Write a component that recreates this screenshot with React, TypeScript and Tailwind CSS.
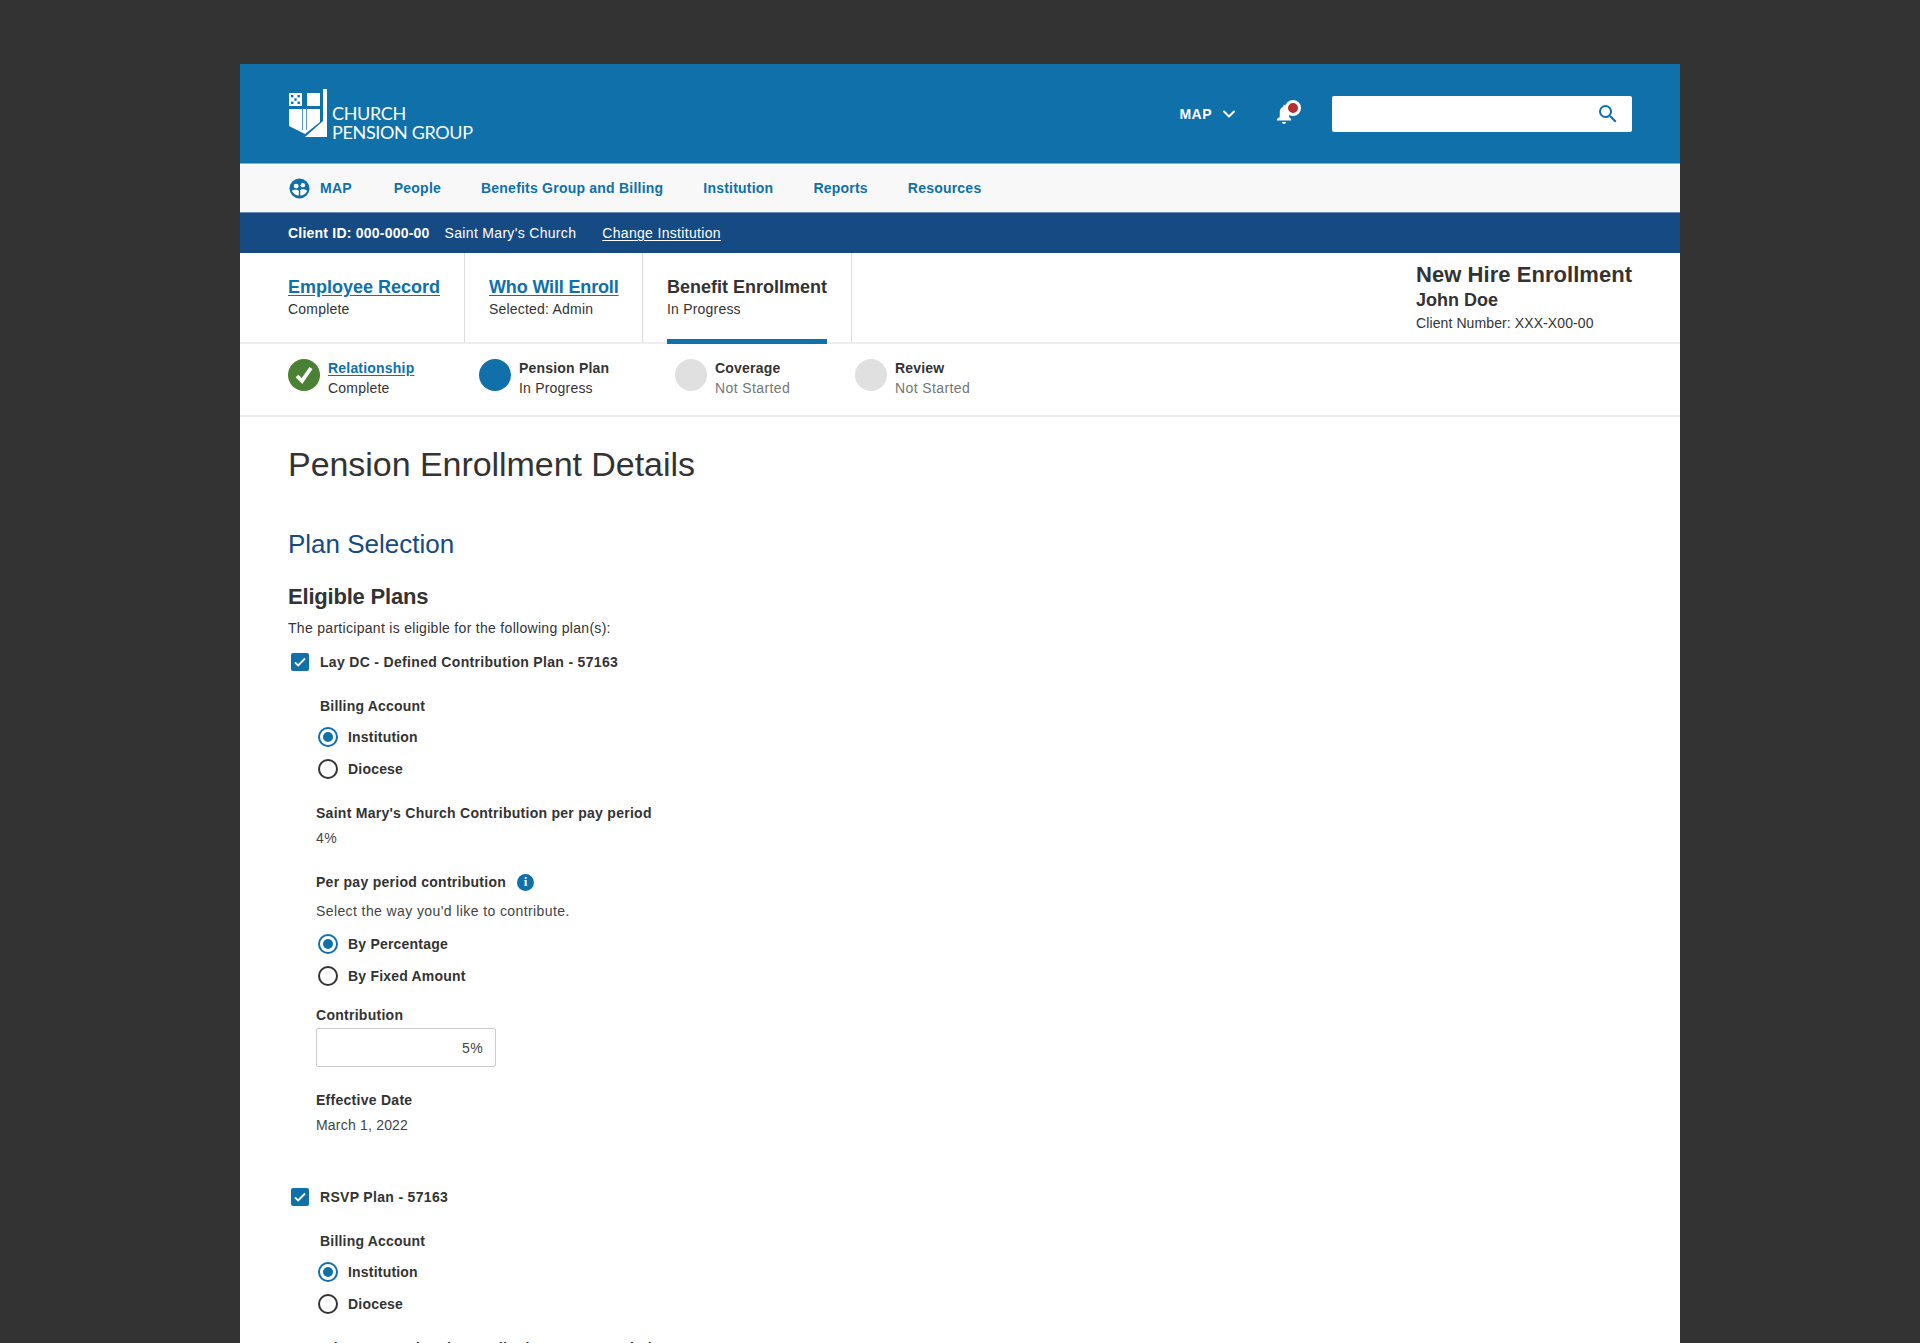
import React from "react";
import { ChevronDown } from "lucide-react";
import { MdSearch } from "react-icons/md";

const navItems = ["People", "Benefits Group and Billing", "Institution", "Reports", "Resources"];

function Logo() {
  return (
    <div className="flex items-start">
      <svg width="40" height="52" viewBox="0 0 40 52" className="mt-[24px] shrink-0">
        <rect x="1" y="5" width="13" height="13" fill="#fff" />
        <g fill="#0f70aa">
          <rect x="3" y="7" width="2.4" height="2.4" />
          <rect x="9.5" y="7" width="2.4" height="2.4" />
          <rect x="6.3" y="10.3" width="2.4" height="2.4" />
          <rect x="3" y="13.600" width="2.4" height="2.4" />
          <rect x="9.5" y="13.600" width="2.4" height="2.4" />
        </g>
        <rect x="19" y="5" width="13" height="13" fill="#fff" />
        <path d="M1 21H32V34L17 46L1 38Z" fill="#fff" />
        <path d="M14.500 21V42M18.500 21V42" stroke="#0f70aa" strokeOpacity="0.7" strokeWidth="1" fill="none" />
        <path d="M35 1H39V49H17L35 33Z" fill="#fff" />
      </svg>
      <div className="mt-[40px] ml-[4px] font-['Lato',sans-serif] text-[18px] leading-[19px] tracking-[-0.35px] text-white">
        <div>CHURCH</div>
        <div>PENSION GROUP</div>
      </div>
    </div>
  );
}

function Header() {
  return (
    <header className="flex h-[99px] items-start justify-between bg-[#0f70aa] pl-12 pr-12">
      <Logo />
      <div className="mt-8 flex items-center">
        <span className="text-sm font-bold tracking-[0.5px] text-white">MAP</span>
        <ChevronDown className="ml-[7px] h-5 w-5 text-white" strokeWidth={2.4} />
        <div className="relative ml-[35px] mr-[38px] h-[22px] w-[20px]">
          <svg viewBox="0 0 24 24" className="h-[22px] w-[20px] fill-white" preserveAspectRatio="none">
            <path d="M12 23a2.400 2.400 0 0 0 2.400-2.200H9.600A2.400 2.400 0 0 0 12 23Zm8.500-5.600-2.400-2V10c0-3-1.600-5.200-4.300-5.900V3.300a1.300 1.300 0 0 0-2.600 0v.8C8.500 4.800 6.900 7 6.900 10v5.400l-3.400 2v1.800h17Z" />
          </svg>
          <span className="absolute right-[-7px] top-[-3px] h-4 w-4 rounded-full border-[3px] border-white bg-[#b5302d]" />
        </div>
        <div className="flex h-9 w-[300px] items-center justify-end rounded-[2px] bg-white pr-[12px]">
          <MdSearch className="h-6 w-6 text-[#0f70aa]" />
        </div>
      </div>
    </header>
  );
}

function MainNav() {
  return (
    <nav className="flex h-[49px] items-center border-t border-[#7fb0cf] bg-[#f8f8f8] pl-12 text-sm font-bold tracking-[0.22px] text-[#0f70aa]">
      <svg viewBox="0 0 22 22" className="ml-[1px] h-[21px] w-[21px]">
        <circle cx="11" cy="11" r="10.500" fill="#0f70aa" />
        <circle cx="7.500" cy="8.500" r="2.600" fill="#fff" />
        <circle cx="14.500" cy="7.500" r="2.300" fill="#fff" />
        <path d="M3 13.500c1-1.500 6.500-1.500 7.300 0v4.800c-3-.2-5.800-2-7.300-4.800ZM11.800 12.500c1-1.200 5.700-1.200 7.200 1-1.200 2.700-4 4.600-7.200 4.800Z" fill="#fff" />
      </svg>
      <span className="ml-[10px]">MAP</span>
      <div className="ml-[42px] flex gap-10">
        {navItems.map((item) => (
          <span key={item}>{item}</span>
        ))}
      </div>
    </nav>
  );
}

function ClientBar() {
  return (
    <div className="flex h-[41px] items-center border-t border-[#6f8fb3] bg-[#164a82] pl-12 text-sm text-white">
      <span className="font-bold tracking-[0.22px]">Client ID: 000-000-00</span>
      <span className="ml-[15px] tracking-[0.32px]">Saint Mary's Church</span>
      <span className="ml-[26px] tracking-[0.32px] underline underline-offset-2">Change Institution</span>
    </div>
  );
}

function TabBar() {
  return (
    <div className="flex h-[91px] border-b-2 border-[#eeeeee] text-[#333]">
      <div className="w-[225px] border-r border-[#dddddd] pl-12 pt-[22px]">
        <div className="text-lg font-bold leading-6 text-[#0f70aa] underline underline-offset-2">Employee Record</div>
        <div className="text-sm leading-5 tracking-[0.2px]">Complete</div>
      </div>
      <div className="w-[178px] border-r border-[#dddddd] pl-6 pt-[22px]">
        <div className="text-lg font-bold leading-6 tracking-[-0.15px] text-[#0f70aa] underline underline-offset-2">Who Will Enroll</div>
        <div className="text-sm leading-5 tracking-[0.2px]">Selected: Admin</div>
      </div>
      <div className="relative w-[209px] border-r border-[#dddddd] pl-6 pt-[22px]">
        <div className="text-lg font-bold leading-6">Benefit Enrollment</div>
        <div className="text-sm leading-5 tracking-[0.2px]">In Progress</div>
        <div className="absolute bottom-[-2px] left-6 h-[5px] w-[160px] bg-[#0f70aa]" />
      </div>
      <div className="ml-auto w-[264px] pt-[9px]">
        <div className="text-[22px] font-bold leading-[26px] tracking-[0.05px]">New Hire Enrollment</div>
        <div className="text-lg font-bold leading-6">John Doe</div>
        <div className="mt-[1px] text-sm leading-5 tracking-[0.1px]">Client Number: XXX-X00-00</div>
      </div>
    </div>
  );
}

function Step({
  circle,
  label,
  status,
  link,
  muted,
  className,
  children,
}: {
  circle: string;
  label: string;
  status: string;
  link?: boolean;
  muted?: boolean;
  className: string;
  children?: React.ReactNode;
}) {
  return (
    <div className={`flex items-start gap-2 ${className}`}>
      <div className={`mt-px flex h-8 w-8 items-center justify-center rounded-full ${circle}`}>{children}</div>
      <div className="text-sm leading-5 tracking-[0.2px]">
        <div className={link ? "font-bold text-[#0f70aa] underline underline-offset-2" : "font-bold text-[#333]"}>{label}</div>
        <div className={muted ? "tracking-[0.4px] text-[#757575]" : "text-[#333]"}>{status}</div>
      </div>
    </div>
  );
}

function StepBar() {
  return (
    <div className="flex h-[73px] items-start border-b-2 border-[#eeeeee] pl-12 pt-[14px]">
      <Step circle="bg-[#4a8135]" label="Relationship" status="Complete" link className="w-[191px]">
        <svg viewBox="0 0 24 24" className="h-[24px] w-[24px]">
          <path d="M5 13l5 5L19 5" fill="none" stroke="#fff" strokeWidth="3.800" />
        </svg>
      </Step>
      <Step circle="bg-[#0f70aa]" label="Pension Plan" status="In Progress" className="w-[196px]" />
      <Step circle="bg-[#e0e0e0]" label="Coverage" status="Not Started" muted className="w-[180px]" />
      <Step circle="bg-[#e0e0e0]" label="Review" status="Not Started" muted className="w-[180px]" />
    </div>
  );
}

function Checkbox({ label, className }: { label: string; className: string }) {
  return (
    <div className={`flex h-5 items-center ${className}`}>
      <div className="ml-[3px] flex h-[18px] w-[18px] items-center justify-center rounded-[2px] bg-[#0f70aa]">
        <svg viewBox="0 0 18 18" className="h-[18px] w-[18px]">
          <path d="M4 9.500l3.200 3L14 5.500" fill="none" stroke="#fff" strokeWidth="1.800" />
        </svg>
      </div>
      <span className="ml-[11px] text-sm font-bold tracking-[0.32px] text-[#333]">{label}</span>
    </div>
  );
}

function Radio({ label, checked, className }: { label: string; checked?: boolean; className: string }) {
  return (
    <div className={`flex h-5 items-center pl-[30px] ${className}`}>
      <div
        className={`flex h-5 w-5 items-center justify-center rounded-full border-2 ${
          checked ? "border-[#0f70aa]" : "border-[#333]"
        }`}
      >
        {checked && <div className="h-[10px] w-[10px] rounded-full bg-[#0f70aa]" />}
      </div>
      <span className="ml-[10px] text-sm font-bold tracking-[0.2px] text-[#333]">{label}</span>
    </div>
  );
}

function Billing() {
  return (
    <>
      <div className="mt-6 pl-[32px] text-sm font-bold leading-5 tracking-[0.2px] text-[#333]">Billing Account</div>
      <Radio label="Institution" checked className="mt-[11px]" />
      <Radio label="Diocese" className="mt-3" />
    </>
  );
}

function Label({ children, className }: { children: React.ReactNode; className: string }) {
  return <div className={`pl-7 text-sm font-bold leading-5 tracking-[0.27px] text-[#333] ${className}`}>{children}</div>;
}

function Value({ children, className }: { children: React.ReactNode; className: string }) {
  return <div className={`pl-7 text-sm leading-5 tracking-[0.4px] text-[#444] ${className}`}>{children}</div>;
}

function PlanSelection() {
  return (
    <main className="pl-12 pt-[27px] text-[#333]">
      <h1 className="text-[34px] leading-10 tracking-[-0.05px]">Pension Enrollment Details</h1>
      <h2 className="mt-[44px] text-[26px] leading-8 text-[#164a82]">Plan Selection</h2>
      <h3 className="mt-[23px] text-[22px] font-bold leading-7 tracking-[-0.2px]">Eligible Plans</h3>
      <p className="mt-[7px] text-sm leading-5 tracking-[0.3px]">The participant is eligible for the following plan(s):</p>

      <Checkbox label="Lay DC - Defined Contribution Plan - 57163" className="mt-[14px]" />
      <Billing />
      <Label className="mt-6">Saint Mary's Church Contribution per pay period</Label>
      <Value className="mt-[5px]">4%</Value>
      <div className="mt-6 flex items-center">
        <Label className="">Per pay period contribution</Label>
        <div className="ml-[11px] flex h-[17px] w-[17px] items-center justify-center rounded-full bg-[#0f70aa] font-['Liberation_Serif',serif] text-[13px] font-bold text-white">
          i
        </div>
      </div>
      <Value className="mt-[9px]">Select the way you'd like to contribute.</Value>
      <Radio label="By Percentage" checked className="mt-[13px]" />
      <Radio label="By Fixed Amount" className="mt-3" />
      <Label className="mt-[19px]">Contribution</Label>
      <div className="ml-7 mt-[3px] flex h-[39px] w-[180px] items-center justify-end rounded-[2px] border border-[#cccccc] pr-[12px] text-sm tracking-[0.4px] text-[#444]">
        5%
      </div>
      <Label className="mt-[23px]">Effective Date</Label>
      <div className="mt-[5px] pl-7 text-sm leading-5 tracking-[0.2px] text-[#444]">March 1, 2022</div>

      <Checkbox label="RSVP Plan - 57163" className="mt-[52px]" />
      <Billing />
      <Label className="mt-6">Saint Mary's Church Contribution per pay period</Label>
    </main>
  );
}

export default function App() {
  return (
    <div className="h-[1343px] overflow-hidden bg-[#333333] px-[240px] pt-16 font-['Liberation_Sans',Arial,sans-serif]">
      <div className="h-full bg-white">
        <Header />
        <MainNav />
        <ClientBar />
        <TabBar />
        <StepBar />
        <PlanSelection />
      </div>
    </div>
  );
}
